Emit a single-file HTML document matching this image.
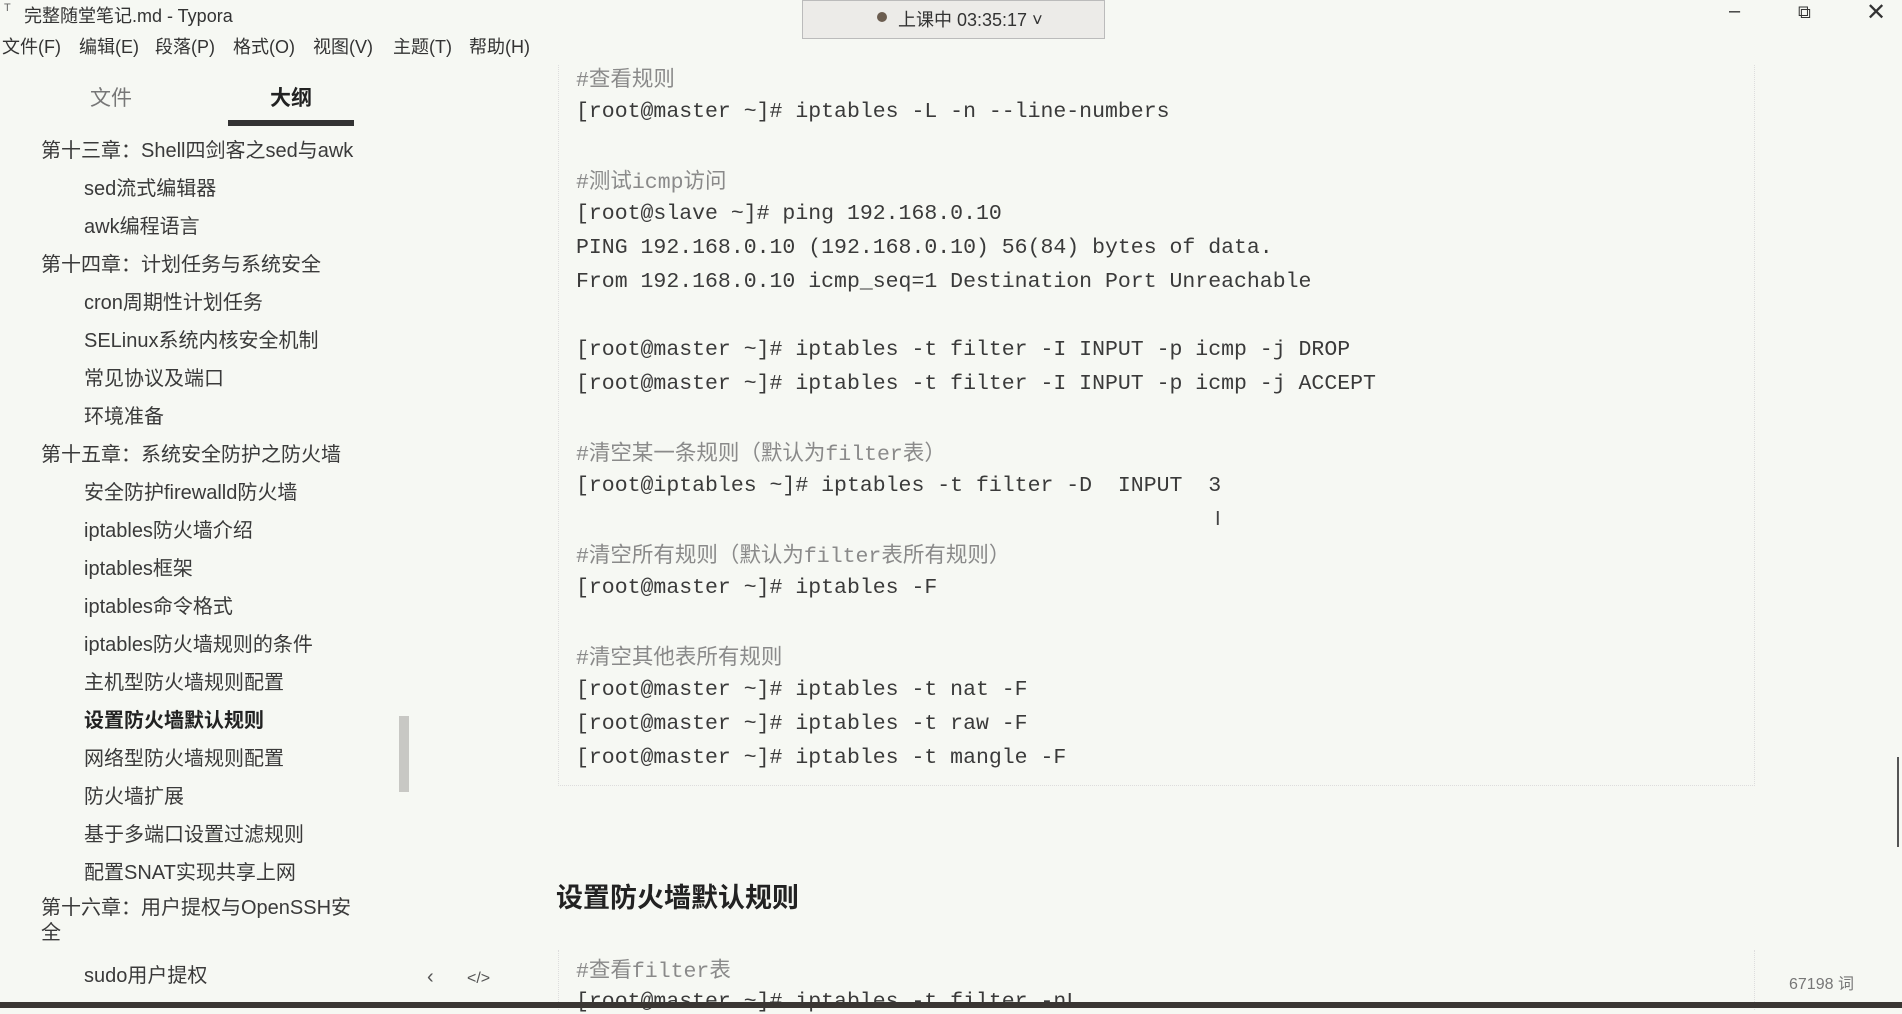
<!DOCTYPE html>
<html><head><meta charset="utf-8"><style>
body{margin:0;width:1902px;height:1008px;overflow:hidden;background:#f6f8f3;font-family:"Liberation Sans","Noto Sans CJK SC",sans-serif;color:#333;position:relative}
.a{position:absolute;white-space:pre}
.m{font-family:"Liberation Mono","Noto Sans CJK SC",monospace;font-size:21.5px;color:#3a3a3a;left:576px}
.c{color:#8a8a8a}
.o{font-size:20px;color:#3a3a3a}
.l1{left:41px}.l2{left:84px}
.mn{font-size:18px;top:33px}
</style></head><body>
<div class="a" style="left:4px;top:2px;font-size:11px;color:#666">T</div>
<div class="a" style="left:24px;top:2px;font-size:18px">完整随堂笔记.md - Typora</div>
<div class="a" style="left:802px;top:0;width:303px;height:39px;background:#ecebe8;border:1px solid #bbb;box-sizing:border-box"></div>
<div class="a" style="left:877px;top:12px;width:10px;height:10px;border-radius:50%;background:#6b5d50"></div>
<div class="a" style="left:898px;top:6px;font-size:18px;color:#333">上课中 03:35:17 ˅</div>
<div class="a" style="left:1729px;top:0;font-size:20px">–</div>
<div class="a" style="left:1798px;top:2px;font-size:18px">⧉</div>
<div class="a" style="left:1866px;top:-2px;font-size:24px">✕</div>
<div class="a mn" style="left:2px">文件(F)</div>
<div class="a mn" style="left:79px">编辑(E)</div>
<div class="a mn" style="left:155px">段落(P)</div>
<div class="a mn" style="left:233px">格式(O)</div>
<div class="a mn" style="left:313px">视图(V)</div>
<div class="a mn" style="left:393px">主题(T)</div>
<div class="a mn" style="left:469px">帮助(H)</div>
<div class="a" style="left:90px;top:82px;font-size:21px;color:#777">文件</div>
<div class="a" style="left:270px;top:82px;font-size:21px;font-weight:bold;color:#222">大纲</div>
<div class="a" style="left:228px;top:120px;width:126px;height:6px;background:#333"></div>
<div class="a o l1" style="top:134px">第十三章：Shell四剑客之sed与awk</div>
<div class="a o l2" style="top:172px">sed流式编辑器</div>
<div class="a o l2" style="top:210px">awk编程语言</div>
<div class="a o l1" style="top:248px">第十四章：计划任务与系统安全</div>
<div class="a o l2" style="top:286px">cron周期性计划任务</div>
<div class="a o l2" style="top:324px">SELinux系统内核安全机制</div>
<div class="a o l2" style="top:362px">常见协议及端口</div>
<div class="a o l2" style="top:400px">环境准备</div>
<div class="a o l1" style="top:438px">第十五章：系统安全防护之防火墙</div>
<div class="a o l2" style="top:476px">安全防护firewalld防火墙</div>
<div class="a o l2" style="top:514px">iptables防火墙介绍</div>
<div class="a o l2" style="top:552px">iptables框架</div>
<div class="a o l2" style="top:590px">iptables命令格式</div>
<div class="a o l2" style="top:628px">iptables防火墙规则的条件</div>
<div class="a o l2" style="top:666px">主机型防火墙规则配置</div>
<div class="a o l2" style="top:704px;font-weight:bold;color:#222">设置防火墙默认规则</div>
<div class="a o l2" style="top:742px">网络型防火墙规则配置</div>
<div class="a o l2" style="top:780px">防火墙扩展</div>
<div class="a o l2" style="top:818px">基于多端口设置过滤规则</div>
<div class="a o l2" style="top:856px">配置SNAT实现共享上网</div>
<div class="a o l1" style="top:896px;white-space:normal;width:330px;line-height:25px">第十六章：用户提权与OpenSSH安全</div>
<div class="a o l2" style="top:959px">sudo用户提权</div>
<div class="a" style="left:399px;top:716px;width:10px;height:76px;background:#c8c8c4"></div>
<div class="a" style="left:427px;top:966px;font-size:20px;color:#555">‹</div>
<div class="a" style="left:467px;top:970px;font-size:16px;color:#555">&lt;/&gt;</div>
<div class="a" style="left:558px;top:65px;width:1195px;height:720px;border-left:1px dotted #ddd;border-right:1px dotted #ddd;border-bottom:1px dotted #ddd"></div>
<div class="a m c" style="top:62px">#查看规则</div>
<div class="a m" style="top:100px">[root@master ~]# iptables -L -n --line-numbers</div>
<div class="a m c" style="top:164px">#测试icmp访问</div>
<div class="a m" style="top:202px">[root@slave ~]# ping 192.168.0.10</div>
<div class="a m" style="top:236px">PING 192.168.0.10 (192.168.0.10) 56(84) bytes of data.</div>
<div class="a m" style="top:270px">From 192.168.0.10 icmp_seq=1 Destination Port Unreachable</div>
<div class="a m" style="top:338px">[root@master ~]# iptables -t filter -I INPUT -p icmp -j DROP</div>
<div class="a m" style="top:372px">[root@master ~]# iptables -t filter -I INPUT -p icmp -j ACCEPT</div>
<div class="a m c" style="top:436px">#清空某一条规则（默认为filter表）</div>
<div class="a m" style="top:474px">[root@iptables ~]# iptables -t filter -D  INPUT  3</div>
<div class="a m c" style="top:538px">#清空所有规则（默认为filter表所有规则）</div>
<div class="a m" style="top:576px">[root@master ~]# iptables -F</div>
<div class="a m c" style="top:640px">#清空其他表所有规则</div>
<div class="a m" style="top:678px">[root@master ~]# iptables -t nat -F</div>
<div class="a m" style="top:712px">[root@master ~]# iptables -t raw -F</div>
<div class="a m" style="top:746px">[root@master ~]# iptables -t mangle -F</div>
<div class="a" style="left:1215px;top:508px;font-size:20px;color:#444">I</div>
<div class="a" style="left:556px;top:876px;font-size:27px;font-weight:bold;color:#222">设置防火墙默认规则</div>
<div class="a" style="left:558px;top:950px;width:1195px;height:60px;border-left:1px dotted #ddd;border-right:1px dotted #ddd"></div>
<div class="a m c" style="top:953px">#查看filter表</div>
<div class="a m" style="top:990px">[root@master ~]# iptables -t filter -nL</div>
<div class="a" style="left:1789px;top:970px;font-size:16px;color:#777">67198 词</div>
<div class="a" style="left:1897px;top:757px;width:2px;height:90px;background:#555"></div>
<div class="a" style="left:0;top:1002px;width:1902px;height:6px;background:#3a3633"></div>
</body></html>
